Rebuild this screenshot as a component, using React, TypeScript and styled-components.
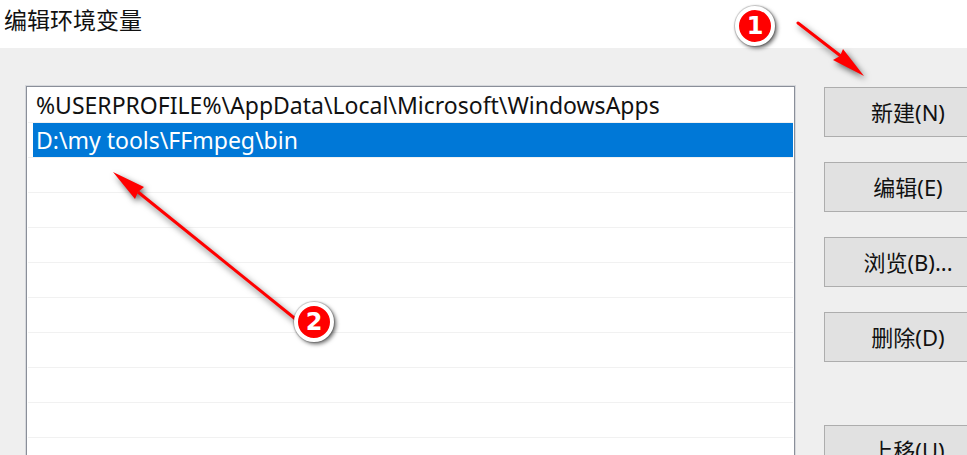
import React, { useState } from 'react';
import styled, { createGlobalStyle } from 'styled-components';

const GlobalStyle = createGlobalStyle`
  * { box-sizing: border-box; }
  html, body { margin: 0; overflow: hidden; background: #efefef; }
  body, button {
    font-family: "Noto Sans", "Noto Sans CJK SC", sans-serif;
    font-size: 23px;
    color: #111;
  }
`;

const Dialog = styled.main`
  position: relative;
  display: flex;
  flex-direction: column;
  height: 100vh;
  overflow: hidden;
  background: #efefef;
`;

const TitleBar = styled.header`
  flex: none;
  height: 48px;
  padding: 4px 4px 0;
  background: #fff;
`;

const Title = styled.h1`
  margin: 0;
  font-size: 23px;
  font-weight: 400;
  line-height: 32px;
`;

const Content = styled.div`
  display: flex;
  align-items: flex-start;
  gap: 29px;
  padding: 38px 0 0 26px;
`;

const PathList = styled.ul`
  flex: 1;
  min-width: 0;
  margin: 0;
  padding: 1px 1px 0;
  list-style: none;
  background: #fff;
  border: 1px solid #8a8f99;
  box-shadow: 0 0 0 1px #d6d8dc;
`;

const PathRow = styled.li`
  height: 35px;
  padding-left: 5px;
  border-bottom: 1px solid #f1f1f1;
  white-space: nowrap;
`;

const PathText = styled.span<{ $selected: boolean }>`
  display: block;
  height: 34px;
  padding-left: 3px;
  line-height: 34px;
  background: ${(p) => (p.$selected ? '#0078d7' : 'transparent')};
  color: ${(p) => (p.$selected ? '#fff' : '#111')};
`;

const Actions = styled.div`
  flex: 0 0 143px;
  min-width: 0;
  display: flex;
  flex-direction: column;
  gap: 25px;
  padding-top: 1px;
`;

const ActionButton = styled.button<{ $newGroup?: boolean }>`
  flex: none;
  width: 168px;
  height: 50px;
  margin-top: ${(p) => (p.$newGroup ? '38px' : '0')};
  padding: 0;
  border: 1px solid #adadad;
  background: #e1e1e1;
  font-size: 22px;
  line-height: 32px;
`;

const Arrows = styled.svg`
  position: absolute;
  top: 0;
  left: 0;
  pointer-events: none;
  filter: drop-shadow(2px 3px 3px rgba(0, 0, 0, 0.6));
`;

const Badge = styled.span<{ $x: number; $y: number }>`
  position: absolute;
  left: ${(p) => p.$x}px;
  top: ${(p) => p.$y}px;
  width: 40px;
  height: 40px;
  border: 4px solid #fff;
  border-radius: 50%;
  background: #f00;
  box-shadow: 0 0 1px 1px rgba(0, 0, 0, 0.2), 2px 2px 4px rgba(0, 0, 0, 0.6);
  color: #fff;
  font: bold 24px/32px "DejaVu Sans", sans-serif;
  text-align: center;
  pointer-events: none;
`;

const paths = [
  '%USERPROFILE%\\AppData\\Local\\Microsoft\\WindowsApps',
  'D:\\my tools\\FFmpeg\\bin',
];
const rows = [...paths, ...Array<string>(10).fill('')];

export default function App() {
  const [selected, setSelected] = useState(1);
  return (
    <Dialog>
      <GlobalStyle />
      <TitleBar>
        <Title>编辑环境变量</Title>
      </TitleBar>
      <Content>
        <PathList role="listbox" aria-label="编辑环境变量">
          {rows.map((path, i) => (
            <PathRow
              key={i}
              role={path ? 'option' : 'presentation'}
              aria-selected={path ? i === selected : undefined}
              onClick={() => path && setSelected(i)}
            >
              <PathText $selected={i === selected}>{path}</PathText>
            </PathRow>
          ))}
        </PathList>
        <Actions>
          <ActionButton type="button">新建(N)</ActionButton>
          <ActionButton type="button">编辑(E)</ActionButton>
          <ActionButton type="button">浏览(B)...</ActionButton>
          <ActionButton type="button">删除(D)</ActionButton>
          <ActionButton type="button" $newGroup>上移(U)</ActionButton>
        </Actions>
      </Content>
      <Arrows width="967" height="455" aria-hidden="true">
        <g fill="#f00" stroke="#f00">
          <path d="M798 23 L842 57" strokeWidth="3" strokeLinecap="round" />
          <path d="M864 76 L843 49 L840 56 L833 60 Z" stroke="none" />
          <path d="M298 321 L138 192" strokeWidth="3" />
          <path d="M113 172 L144 187 L138 192 L135 199 Z" stroke="none" />
        </g>
      </Arrows>
      <Badge $x={735} $y={6}>1</Badge>
      <Badge $x={294} $y={302}>2</Badge>
    </Dialog>
  );
}
